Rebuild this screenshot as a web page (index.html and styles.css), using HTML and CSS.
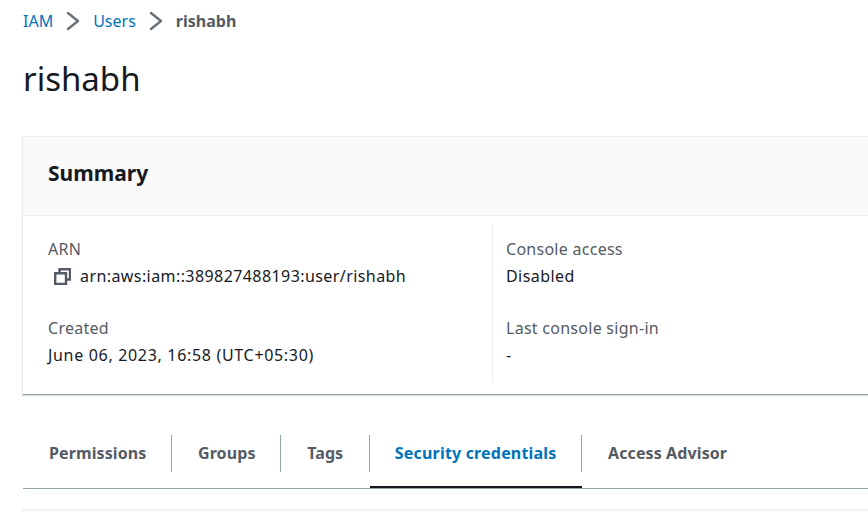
FILE: index.html
```html
<!DOCTYPE html>
<html lang="en">
<head>
  <meta charset="UTF-8">
  <meta name="viewport" content="width=device-width, initial-scale=1.0">
  <title>rishabh | IAM</title>
  <link rel="stylesheet" href="styles.css">
</head>
<body>
  <nav class="breadcrumbs">
    <a href="#">IAM</a>
    <svg class="crumb-arrow" viewBox="0 0 14 20" width="14" height="20"><path d="M2 2 L12 10 L2 18"/></svg>
    <a href="#">Users</a>
    <svg class="crumb-arrow" viewBox="0 0 14 20" width="14" height="20"><path d="M2 2 L12 10 L2 18"/></svg>
    <span class="current">rishabh</span>
  </nav>

  <h1>rishabh</h1>

  <section class="summary">
    <h2>Summary</h2>
    <div class="summary-body">
      <div class="summary-col">
        <div class="field">
          <div class="label">ARN</div>
          <div class="value arn">
            <svg class="copy-icon" viewBox="0 0 17 17" width="17" height="17"><path d="M5.5 5 V1.2 H16 V11.5 H12"/><path d="M1.2 5.2 H12 V16 H1.2 Z"/></svg>
            arn:aws:iam::389827488193:user/rishabh
          </div>
        </div>
        <div class="field">
          <div class="label">Created</div>
          <div class="value date">June 06, 2023, 16:58 (UTC+05:30)</div>
        </div>
      </div>
      <div class="summary-col divided">
        <div class="field">
          <div class="label">Console access</div>
          <div class="value">Disabled</div>
        </div>
        <div class="field">
          <div class="label">Last console sign-in</div>
          <div class="value">-</div>
        </div>
      </div>
    </div>
  </section>

  <div class="tabs">
    <a class="tab" href="#">Permissions</a>
    <a class="tab" href="#">Groups</a>
    <a class="tab" href="#">Tags</a>
    <a class="tab active" href="#">Security credentials</a>
    <a class="tab" href="#">Access Advisor</a>
  </div>

  <div class="next-panel"></div>
</body>
</html>
```

FILE: styles.css
```css
* {
  margin: 0;
  padding: 0;
  box-sizing: border-box;
}

html, body {
  height: 512px;
  overflow: hidden;
}

body {
  width: 868px;
  padding-left: 23px;
  font-family: "Noto Sans", "Open Sans", sans-serif;
  font-size: 16px;
  line-height: 22px;
  color: #16191f;
  background-color: #fff;
}

a {
  text-decoration: none;
}

/* Breadcrumbs */
.breadcrumbs {
  display: flex;
  align-items: center;
  height: 22px;
  margin-top: 10px;
}

.breadcrumbs a {
  color: #0073bb;
}

.crumb-arrow {
  margin: 0 13px;
  fill: none;
  stroke: #687078;
  stroke-width: 2.4;
  stroke-linecap: round;
  stroke-linejoin: round;
}

.current {
  font-weight: 700;
  color: #545b64;
}

h1 {
  margin-top: 23px;
  font-size: 33px;
  line-height: 48px;
  font-weight: 400;
}

/* Summary panel */
.summary {
  width: 900px;
  height: 259px;
  margin-top: 33px;
  margin-left: -1px;
  border: 1px solid #eaeded;
  border-bottom: 1px solid #95a5a6;
  box-shadow: 0 1px 1px rgba(0, 27, 36, 0.15);
}

.summary h2 {
  height: 79px;
  padding: 0 25px;
  font-size: 21px;
  line-height: 72px;
  font-weight: 700;
  background-color: #fafafa;
  border-bottom: 1px solid #eaeded;
}

.summary-body {
  display: flex;
  padding-top: 8px;
}

.summary-col {
  flex: none;
  width: 469px;
  height: 158px;
  padding-left: 25px;
}

.summary-col.divided {
  border-left: 1px solid #eaeded;
  padding-left: 13px;
}

.field {
  height: 79px;
  padding-top: 14px;
}

.label {
  color: #545b64;
  margin-bottom: 5px;
  letter-spacing: 0.27px;
}

.value {
  letter-spacing: 0.42px;
}

.value.date {
  letter-spacing: 0.68px;
}

.arn {
  display: flex;
  align-items: center;
  gap: 9px;
  padding-left: 6px;
}

.copy-icon {
  flex: none;
  fill: none;
  stroke: #545b64;
  stroke-width: 2.4;
}

/* Tabs */
.tabs {
  display: flex;
  width: 845px;
  height: 54px;
  margin-top: 40px;
  border-bottom: 1px solid #95a5a6;
  align-items: flex-start;
}

.tab {
  position: relative;
  height: 53px;
  padding: 7px 25.6px 0 26px;
  font-weight: 700;
  letter-spacing: 0.1px;
  color: #545b64;
}

.tab + .tab::before {
  content: "";
  position: absolute;
  left: -1px;
  top: 0;
  height: 37px;
  border-left: 1px solid #95a5a6;
}

.tab.active {
  margin-left: 1px;
  padding-left: 25px;
  letter-spacing: 0.18px;
  color: #0073bb;
  border-bottom: 2px solid #16191f;
}

.next-panel {
  width: 900px;
  height: 10px;
  margin-top: 20px;
  margin-left: -1px;
  border: 1px solid #eaeded;
  background-color: #fafafa;
}
```
